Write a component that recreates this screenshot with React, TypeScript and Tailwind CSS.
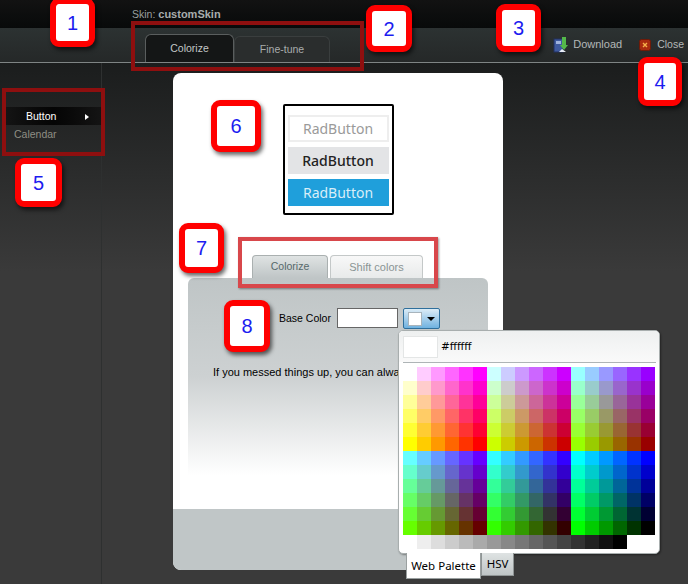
const HEX = ["ff", "cc", "99", "66", "33", "00"];
const GRAYS = ["ffffff", "eeeeee", "dddddd", "cccccc", "bbbbbb", "aaaaaa", "999999", "888888", "777777", "666666", "555555", "444444", "333333", "222222", "111111", "000000"];

// web-safe table: two rows of three red blocks, 6x6 each
const paletteRows: string[][] = [];
[0, 3].forEach((start) => {
  HEX.forEach((b) => {
    const cells: string[] = [];
    [start, start + 1, start + 2].forEach((r) => {
      HEX.forEach((g) => {
        cells.push("#" + HEX[r] + g + b);
      });
    });
    paletteRows.push(cells);
  });
});

function Callout({ n, className }: { n: number; className: string }) {
  return (
    <div
      className={`absolute flex items-center justify-center bg-white border-[6px] border-[#ff0000] rounded-[9px] shadow-[2px_3px_4px_rgba(0,0,0,0.6)] text-[#1c1cf0] text-[20px] font-['Liberation_Sans',sans-serif] ${className}`}
    >
      {n}
    </div>
  );
}

function DownloadIcon() {
  return (
    <svg width="16" height="16" viewBox="0 0 16 16">
      <rect x="1" y="2" width="9" height="13" fill="#3f5a9e" stroke="#22305f" />
      <rect x="3" y="4" width="5" height="3" fill="#9fb2dc" />
      <rect x="9" y="0" width="4" height="9" fill="#54b84a" />
      <path d="M7 8h8l-4 5z" fill="#54b84a" />
      <path d="M6 15l3-3 4 3z" fill="#e8edf5" />
    </svg>
  );
}

function CloseIcon() {
  return (
    <svg width="12" height="12" viewBox="0 0 12 12">
      <rect x="0.5" y="0.5" width="11" height="11" rx="2" fill="#a92b0f" stroke="#6e1a08" />
      <path d="M4 4l4 4M8 4l-4 4" stroke="#f6b04a" strokeWidth="1.4" />
    </svg>
  );
}

function SampleButton({ className }: { className: string }) {
  return (
    <div className={`h-[27px] flex items-center justify-center text-[14px] font-['Noto_Sans',sans-serif] ${className}`}>
      RadButton
    </div>
  );
}

export default function App() {
  return (
    <div className="relative w-[688px] h-[584px] overflow-hidden flex flex-col bg-[#3a3a3a] font-['Liberation_Sans',sans-serif] text-[10.5px]">
      <div className="h-[28px] shrink-0 bg-gradient-to-b from-[#121212] to-[#080a0a] pl-[132px] pt-[8px] text-[#9a9f9f] leading-[12px]">
        Skin: <span className="font-bold text-[11px] text-[#a8acac]">customSkin</span>
      </div>

      <div className="h-[35px] shrink-0 flex items-end justify-between bg-gradient-to-b from-[#2c3232] to-[#252828] border-b border-[#7f8484]">
        <div className="flex items-end pl-[145px]">
          <div className="w-[89px] h-[28px] flex items-center justify-center rounded-t-[6px] border border-b-0 border-[#5a5e5e] bg-[#141616] text-[#c2c6c6]">
            Colorize
          </div>
          <div className="w-[96px] h-[26px] flex items-center justify-center rounded-t-[6px] border border-b-0 border-[#3a3e3e] bg-[#2a2d2d] text-[#a8acac]">
            Fine-tune
          </div>
        </div>
        <div className="flex items-center h-[31px] pb-[4px] pr-[4px] text-[#b4b8b8]">
          <DownloadIcon />
          <span className="ml-[4px] text-[11px]">Download</span>
          <span className="ml-[17px]"><CloseIcon /></span>
          <span className="ml-[6px]">Close</span>
        </div>
      </div>

      <div className="flex-1 flex bg-gradient-to-b from-[#1b1d1d] to-[#3a3a3a] to-40%">
        <div className="w-[102px] shrink-0 border-r border-[#2e3030] pt-[44px] pl-[6px]">
          <div className="h-[18px] flex items-center justify-between bg-gradient-to-r from-[#141414] via-[#050505] to-[#141414] pl-[20px] pr-[12px] pt-[1px] text-white">
            Button
            <span className="w-0 h-0 border-y-[3px] border-y-transparent border-l-[4px] border-l-white" />
          </div>
          <div className="h-[18px] flex items-center pl-[8px] pt-[1px] text-[#8e8e84]">Calendar</div>
        </div>

        <div className="ml-[71px] mt-[10px] w-[330px] h-[497px] flex flex-col bg-white rounded-[8px] overflow-hidden">
          <div className="self-center mt-[31px] w-[111px] h-[111px] border-2 border-black rounded-[2px] bg-white px-[3px] pt-[9px] flex flex-col gap-[5px]">
            <SampleButton className="border-2 border-[#eeeeee] text-[#9a9a9a]" />
            <SampleButton className="bg-[#e3e4e6] text-[#222222] font-medium" />
            <SampleButton className="bg-[#1f9fdb] text-[#d8eef8]" />
          </div>

          <div className="flex items-end pl-[79px] mt-[40px] h-[23px]">
            <div className="w-[76px] h-[23px] flex items-center justify-center rounded-t-[4px] border border-b-0 border-[#aab0b0] bg-gradient-to-b from-[#dfe3e3] to-[#bfc5c6] text-[#56686a]">
              Colorize
            </div>
            <div className="ml-[2px] w-[93px] h-[23px] flex items-center justify-center rounded-t-[4px] border border-b-0 border-[#c4c8c8] bg-gradient-to-b from-[#f8f8f8] to-[#e8eaea] text-[11px] text-[#8a9494]">
              Shift colors
            </div>
          </div>

          <div className="mx-[15px] h-[197px] shrink-0 rounded-t-[6px] bg-gradient-to-b from-[#bfc5c6] via-[#cdd1d2] via-50% to-white text-black">
            <div className="flex items-start pt-[30px] pl-[91px]">
              <span className="mt-[3px] w-[58px] leading-[14px]">Base Color</span>
              <div className="w-[61px] h-[20px] bg-white border border-[#666666]" />
              <div className="ml-[5px] w-[37px] h-[21px] flex items-center gap-[5px] pl-[4px] rounded-[2px] border border-[#2f6f9c] bg-gradient-to-b from-[#dcecf6] to-[#6fb2e0]">
                <span className="w-[14px] h-[14px] bg-white border border-[#a8b4bc]" />
                <span className="w-0 h-0 border-x-[4px] border-x-transparent border-t-[4px] border-t-black" />
              </div>
            </div>
            <p className="mt-[36px] pl-[25px] text-[11px] leading-[14px] whitespace-nowrap">
              If you messed things up, you can always reset
            </p>
          </div>

          <div className="h-[34px] shrink-0" />
          <div className="flex-1 bg-[#c0c6c7]" />
        </div>
      </div>

      {/* color picker popup */}
      <div className="absolute left-[398px] top-[330px] w-[262px] h-[224px] rounded-[5px] bg-white border border-[#a8aeae] shadow-[1px_1px_2px_rgba(0,0,0,0.4)] overflow-hidden">
        <div className="h-[31px] flex items-center pl-[4px] bg-gradient-to-b from-[#eef0f0] to-[#fafafa]">
          <span className="w-[35px] h-[22px] bg-white border border-[#e4e6e6]" />
          <span className="ml-[3px] text-[10.5px] font-['DejaVu_Sans',sans-serif] text-black">#ffffff</span>
        </div>
        <div className="ml-[4px] mr-[3px] h-px bg-[#aeb4b6]" />
        <div className="ml-[4px] mt-[4px] flex flex-col">
          {paletteRows.map((cells, i) => (
            <div key={i} className="flex">
              {cells.map((c, j) => (
                <span key={j} className="w-[14px] h-[14px]" style={{ background: c }} />
              ))}
            </div>
          ))}
          <div className="flex">
            {GRAYS.map((c) => (
              <span key={c} className="w-[14px] h-[14px]" style={{ background: "#" + c }} />
            ))}
          </div>
        </div>
      </div>
      <div className="absolute left-[406px] top-[553px] flex items-start text-[11.5px] font-['Noto_Sans',sans-serif] text-black">
        <div className="w-[75px] h-[26px] flex items-center justify-center bg-white border border-t-0 border-[#9aa0a0]">Web Palette</div>
        <div className="w-[33px] h-[23px] flex items-center justify-center bg-gradient-to-b from-[#dfe3e3] to-[#bfc5c6] border border-t-0 border-[#8f9595]">HSV</div>
      </div>

      {/* annotation frames */}
      <div className="absolute left-[131px] top-[21px] w-[233px] h-[50px] border-[4px] border-[#8e0f0f]" />
      <div className="absolute left-[2px] top-[88px] w-[103px] h-[68px] border-[4px] border-[#8e0f0f]" />
      <div className="absolute left-[238px] top-[237px] w-[200px] h-[51px] border-[4px] border-[#d8474b] shadow-[1px_1px_2px_rgba(0,0,0,0.4)]" />

      <Callout n={1} className="left-[50px] top-[-2px] w-[45px] h-[49px]" />
      <Callout n={2} className="left-[366px] top-[5px] w-[46px] h-[47px]" />
      <Callout n={3} className="left-[496px] top-[4px] w-[45px] h-[48px]" />
      <Callout n={4} className="left-[638px] top-[57px] w-[44px] h-[49px]" />
      <Callout n={5} className="left-[15px] top-[158px] w-[47px] h-[49px]" />
      <Callout n={6} className="left-[211px] top-[100px] w-[50px] h-[52px]" />
      <Callout n={7} className="left-[179px] top-[223px] w-[45px] h-[50px]" />
      <Callout n={8} className="left-[224px] top-[300px] w-[46px] h-[52px]" />
    </div>
  );
}
